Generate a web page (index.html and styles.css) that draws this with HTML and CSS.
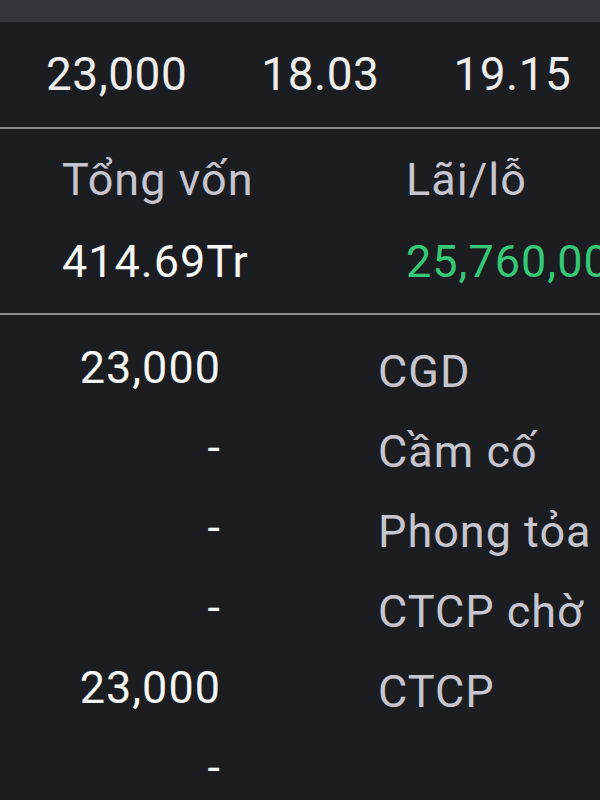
FILE: index.html
```html
<!DOCTYPE html>
<html lang="vi">
<head>
    <meta charset="UTF-8">
    <meta name="viewport" content="width=device-width, initial-scale=1.0">
    <title>Danh mục</title>
    <link rel="stylesheet" href="styles.css">
</head>
<body>

    <!-- Status strip -->
    <div class="topbar"></div>

    <!-- Price row -->
    <div class="prices">
        <span>23,000</span>
        <span>18.03</span>
        <span>19.15</span>
    </div>

    <!-- Summary -->
    <div class="summary">
        <div class="label">Tổng vốn</div>
        <div class="label">Lãi/lỗ</div>
        <div class="value">414.69Tr</div>
        <div class="value profit">25,760,000</div>
    </div>

    <!-- Holdings -->
    <div class="holdings">
        <div class="qty-col">
            <div>23,000</div>
            <div>-</div>
            <div>-</div>
            <div>-</div>
            <div>23,000</div>
            <div>-</div>
        </div>
        <div class="name-col">
            <div>CGD</div>
            <div>Cầm cố</div>
            <div>Phong tỏa</div>
            <div>CTCP chờ</div>
            <div>CTCP</div>
            <div></div>
        </div>
    </div>

</body>
</html>
```

FILE: styles.css
```css
body {
    margin: 0;
    background-color: #1c1d21;
    font-family: Roboto, "Liberation Sans", sans-serif;
    color: #f4f4f4;
    overflow: hidden;
}

.topbar {
    height: 22px;
    background-color: #33373b;
}

.prices {
    display: flex;
    gap: 74px;
    padding: 29px 0 30px 46px;
    font-size: 46px;
    line-height: 46px;
    letter-spacing: 0.5px;
    color: #ececec;
    border-bottom: 2px solid #8b8d90;
    white-space: nowrap;
}

.summary {
    display: grid;
    grid-template-columns: 344px 1fr;
    padding: 10px 0 10px 62px;
    font-size: 45px;
    line-height: 82px;
    letter-spacing: 1px;
    border-bottom: 2px solid #8b8d90;
    white-space: nowrap;
    overflow: hidden;
}

.label {
    color: #c6c5cd;
}

.value {
    color: #f6f6f6;
}

.profit {
    color: #35c878;
}

.holdings {
    display: flex;
    font-size: 45px;
    line-height: 80px;
    letter-spacing: 1px;
    white-space: nowrap;
}

.qty-col {
    width: 221px;
    padding-top: 13px;
    text-align: right;
    color: #f6f6f6;
}

.name-col {
    padding-top: 17px;
    padding-left: 157px;
    color: #c6c5cd;
}

.name-col div {
    height: 80px;
}
```
